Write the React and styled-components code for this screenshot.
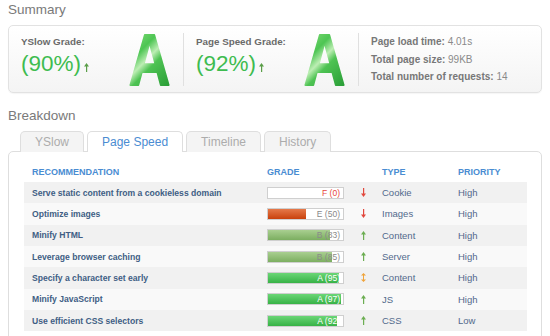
import React from "react";
import styled, { createGlobalStyle } from "styled-components";

const GlobalStyle = createGlobalStyle`
  html, body {
    margin: 0;
    padding: 0;
    background: #fff;
    overflow: hidden;
  }
  body {
    font-family: "Liberation Sans", Arial, sans-serif;
  }
`;

const Page = styled.div`
  width: 550px;
  height: 336px;
  padding: 0 8px;
  box-sizing: border-box;
  overflow: hidden;
`;

const SectionTitle = styled.div`
  font-size: 13.5px;
  line-height: 18px;
  height: 18px;
  color: #7a7a7a;
  margin-top: ${(p) => p.$top}px;
  margin-bottom: ${(p) => p.$bottom}px;
`;

const SummaryBox = styled.div`
  display: flex;
  height: 68px;
  box-sizing: border-box;
  padding: 7px 12px 6px 12px;
  border: 1px solid #e2e2e2;
  border-radius: 5px;
  background: linear-gradient(#ffffff, #f4f4f4);
  box-shadow: 0 1px 1px rgba(0, 0, 0, 0.04);
`;

const GradeBlock = styled.div`
  display: flex;
  align-items: flex-start;
  width: 162px;
  height: 53px;
  border-right: 1px solid #e0e0e0;
  margin-right: 12px;
  flex-shrink: 0;
`;

const GradeInfo = styled.div`
  width: 107px;
  padding-top: 3px;
`;

const GradeLabel = styled.div`
  font-size: 9.8px;
  font-weight: bold;
  line-height: 12px;
  color: #6a6a6a;
`;

const GradePercent = styled.div`
  display: flex;
  align-items: flex-end;
  margin-top: 3px;
  font-size: 22.5px;
  line-height: 26px;
  color: #3ebc50;
  svg {
    margin: 0 0 5px 3px;
  }
`;

const LetterSvg = styled.svg`
  display: block;
  width: 43px;
  height: 53px;
  overflow: visible;
  text {
    font-family: "Liberation Sans", Arial, sans-serif;
    font-weight: bold;
    font-size: 72px;
  }
`;

const Stats = styled.div`
  display: flex;
  flex-direction: column;
`;

const StatLine = styled.div`
  font-size: 10px;
  line-height: 17.5px;
  color: #8a8a8a;
  b {
    color: #777;
  }
`;

const TabBar = styled.div`
  display: flex;
  gap: 3px;
  padding-left: 12px;
  height: 20px;
  position: relative;
  z-index: 1;
`;

const Tab = styled.div`
  padding: 0 14px;
  height: 21px;
  box-sizing: border-box;
  border: 1px solid #dedede;
  border-bottom: none;
  border-radius: 5px 5px 0 0;
  background: ${(p) => (p.$active ? "#fff" : "#f4f4f4")};
  color: ${(p) => (p.$active ? "#4a8cd2" : "#acacac")};
  font-size: 12px;
  line-height: 20px;
`;

const Panel = styled.div`
  border: 1px solid #dedede;
  border-radius: 5px;
  padding: 10px 14px 20px 15px;
  background: #fff;
`;

const Row = styled.div`
  display: grid;
  grid-template-columns: 235px 77px 38px 76px 1fr;
  align-items: center;
  padding-left: 8px;
  height: ${(p) => (p.$head ? "20px" : "21.333px")};
  background: ${(p) => p.$bg || "transparent"};
`;

const HeadCell = styled.div`
  font-size: 9px;
  font-weight: bold;
  color: #4a8cd2;
  line-height: 20px;
`;

const RecName = styled.div`
  font-size: 8.6px;
  font-weight: bold;
  color: #405e84;
  white-space: nowrap;
`;

const Cell = styled.div`
  font-size: 9.5px;
  color: #52698c;
`;

const Bar = styled.div`
  position: relative;
  width: 77px;
  height: 12px;
  box-sizing: border-box;
  border: 1px solid #cfcfcf;
  background: #fff;
  overflow: hidden;
`;

const BarFill = styled.div`
  height: 100%;
  background: ${(p) => p.$fill};
`;

const BarText = styled.span`
  position: absolute;
  right: 3px;
  top: 0;
  font-size: 8.5px;
  line-height: 10px;
  color: ${(p) => p.$color};
`;

const ArrowCell = styled.div`
  display: flex;
  justify-content: center;
`;

const fills = {
  red: "linear-gradient(#e5794a, #c9410c)",
  olive: "linear-gradient(#a9cf90, #7cae60)",
  green: "linear-gradient(#6bd676, #37b246)",
};

function Arrow({ dir, color }) {
  if (dir === "both") {
    return (
      <svg width="5" height="9" viewBox="0 0 5 9">
        <path d="M2.5 0 L5 2.5 H0 Z M2.5 9 L0 6.5 H5 Z" fill={color} />
        <rect x="2" y="2" width="1" height="5" fill={color} />
      </svg>
    );
  }
  if (dir === "down") {
    return (
      <svg width="5" height="9" viewBox="0 0 5 9">
        <rect x="2" y="0" width="1.2" height="6" fill={color} />
        <path d="M0 5.5 H5 L2.5 9 Z" fill={color} />
      </svg>
    );
  }
  return (
    <svg width="5" height="9" viewBox="0 0 5 9">
      <path d="M2.5 0 L5 3.5 H0 Z" fill={color} />
      <rect x="2" y="3" width="1.2" height="6" fill={color} />
    </svg>
  );
}

// big shiny grade letter
function BigLetter({ id }) {
  return (
    <LetterSvg viewBox="0 0 43 53">
      <defs>
        <linearGradient id={id} x1="0" y1="0" x2="43" y2="53" gradientUnits="userSpaceOnUse">
          <stop offset="0" stopColor="#84dc78" />
          <stop offset="0.3" stopColor="#4dc553" />
          <stop offset="0.47" stopColor="#bdeeb4" />
          <stop offset="0.6" stopColor="#4ec353" />
          <stop offset="1" stopColor="#2c9f38" />
        </linearGradient>
      </defs>
      <text
        x="21.5"
        y="52"
        textAnchor="middle"
        fill={`url(#${id})`}
        stroke={`url(#${id})`}
        strokeWidth="1.8"
        strokeLinejoin="round"
        transform="translate(21.5 0) scale(0.8 1) translate(-21.5 0)"
      >
        A
      </text>
    </LetterSvg>
  );
}

const rows = [
  { name: "Serve static content from a cookieless domain", grade: "F (0)", pct: 0, fill: "red", text: "#e8453c", arrow: "down", type: "Cookie", priority: "High" },
  { name: "Optimize images", grade: "E (50)", pct: 50, fill: "red", text: "#888", arrow: "down", type: "Images", priority: "High" },
  { name: "Minify HTML", grade: "B (83)", pct: 83, fill: "olive", text: "#8a8a8a", arrow: "up", type: "Content", priority: "High" },
  { name: "Leverage browser caching", grade: "B (85)", pct: 85, fill: "olive", text: "#8a8a8a", arrow: "up", type: "Server", priority: "High" },
  { name: "Specify a character set early", grade: "A (95)", pct: 95, fill: "green", text: "#fff", arrow: "both", type: "Content", priority: "High" },
  { name: "Minify JavaScript", grade: "A (97)", pct: 97, fill: "green", text: "#fff", arrow: "up", type: "JS", priority: "High" },
  { name: "Use efficient CSS selectors", grade: "A (92)", pct: 92, fill: "green", text: "#fff", arrow: "up", type: "CSS", priority: "Low" },
];

const arrowColors = { up: "#6cae52", down: "#e2483d", both: "#f0a43a" };

function GradeSection({ id, label, percent }) {
  return (
    <GradeBlock>
      <GradeInfo>
        <GradeLabel>{label}</GradeLabel>
        <GradePercent>
          {percent}
          <Arrow dir="up" color="#5a9e48" />
        </GradePercent>
      </GradeInfo>
      <BigLetter id={id} />
    </GradeBlock>
  );
}

export default function App() {
  return (
    <Page>
      <GlobalStyle />
      <SectionTitle $top={1} $bottom={6}>Summary</SectionTitle>
      <SummaryBox>
        <GradeSection id="gradeA1" label="YSlow Grade:" percent="(90%)" />
        <GradeSection id="gradeA2" label="Page Speed Grade:" percent="(92%)" />
        <Stats>
          <StatLine><b>Page load time:</b> 4.01s</StatLine>
          <StatLine><b>Total page size:</b> 99KB</StatLine>
          <StatLine><b>Total number of requests:</b> 14</StatLine>
        </Stats>
      </SummaryBox>

      <SectionTitle $top={14} $bottom={6}>Breakdown</SectionTitle>
      <TabBar>
        <Tab>YSlow</Tab>
        <Tab $active>Page Speed</Tab>
        <Tab>Timeline</Tab>
        <Tab>History</Tab>
      </TabBar>
      <Panel>
        <Row $head>
          <HeadCell>RECOMMENDATION</HeadCell>
          <HeadCell>GRADE</HeadCell>
          <div />
          <HeadCell>TYPE</HeadCell>
          <HeadCell>PRIORITY</HeadCell>
        </Row>
        {rows.map((r, i) => (
          <Row key={r.name} $bg={i % 2 === 0 ? "#f1f1f1" : "#f9f9f9"}>
            <RecName>{r.name}</RecName>
            <Bar>
              <BarFill $fill={fills[r.fill]} style={{ width: `${r.pct}%` }} />
              <BarText $color={r.text}>{r.grade}</BarText>
            </Bar>
            <ArrowCell>
              <Arrow dir={r.arrow} color={arrowColors[r.arrow]} />
            </ArrowCell>
            <Cell>{r.type}</Cell>
            <Cell>{r.priority}</Cell>
          </Row>
        ))}
      </Panel>
    </Page>
  );
}
